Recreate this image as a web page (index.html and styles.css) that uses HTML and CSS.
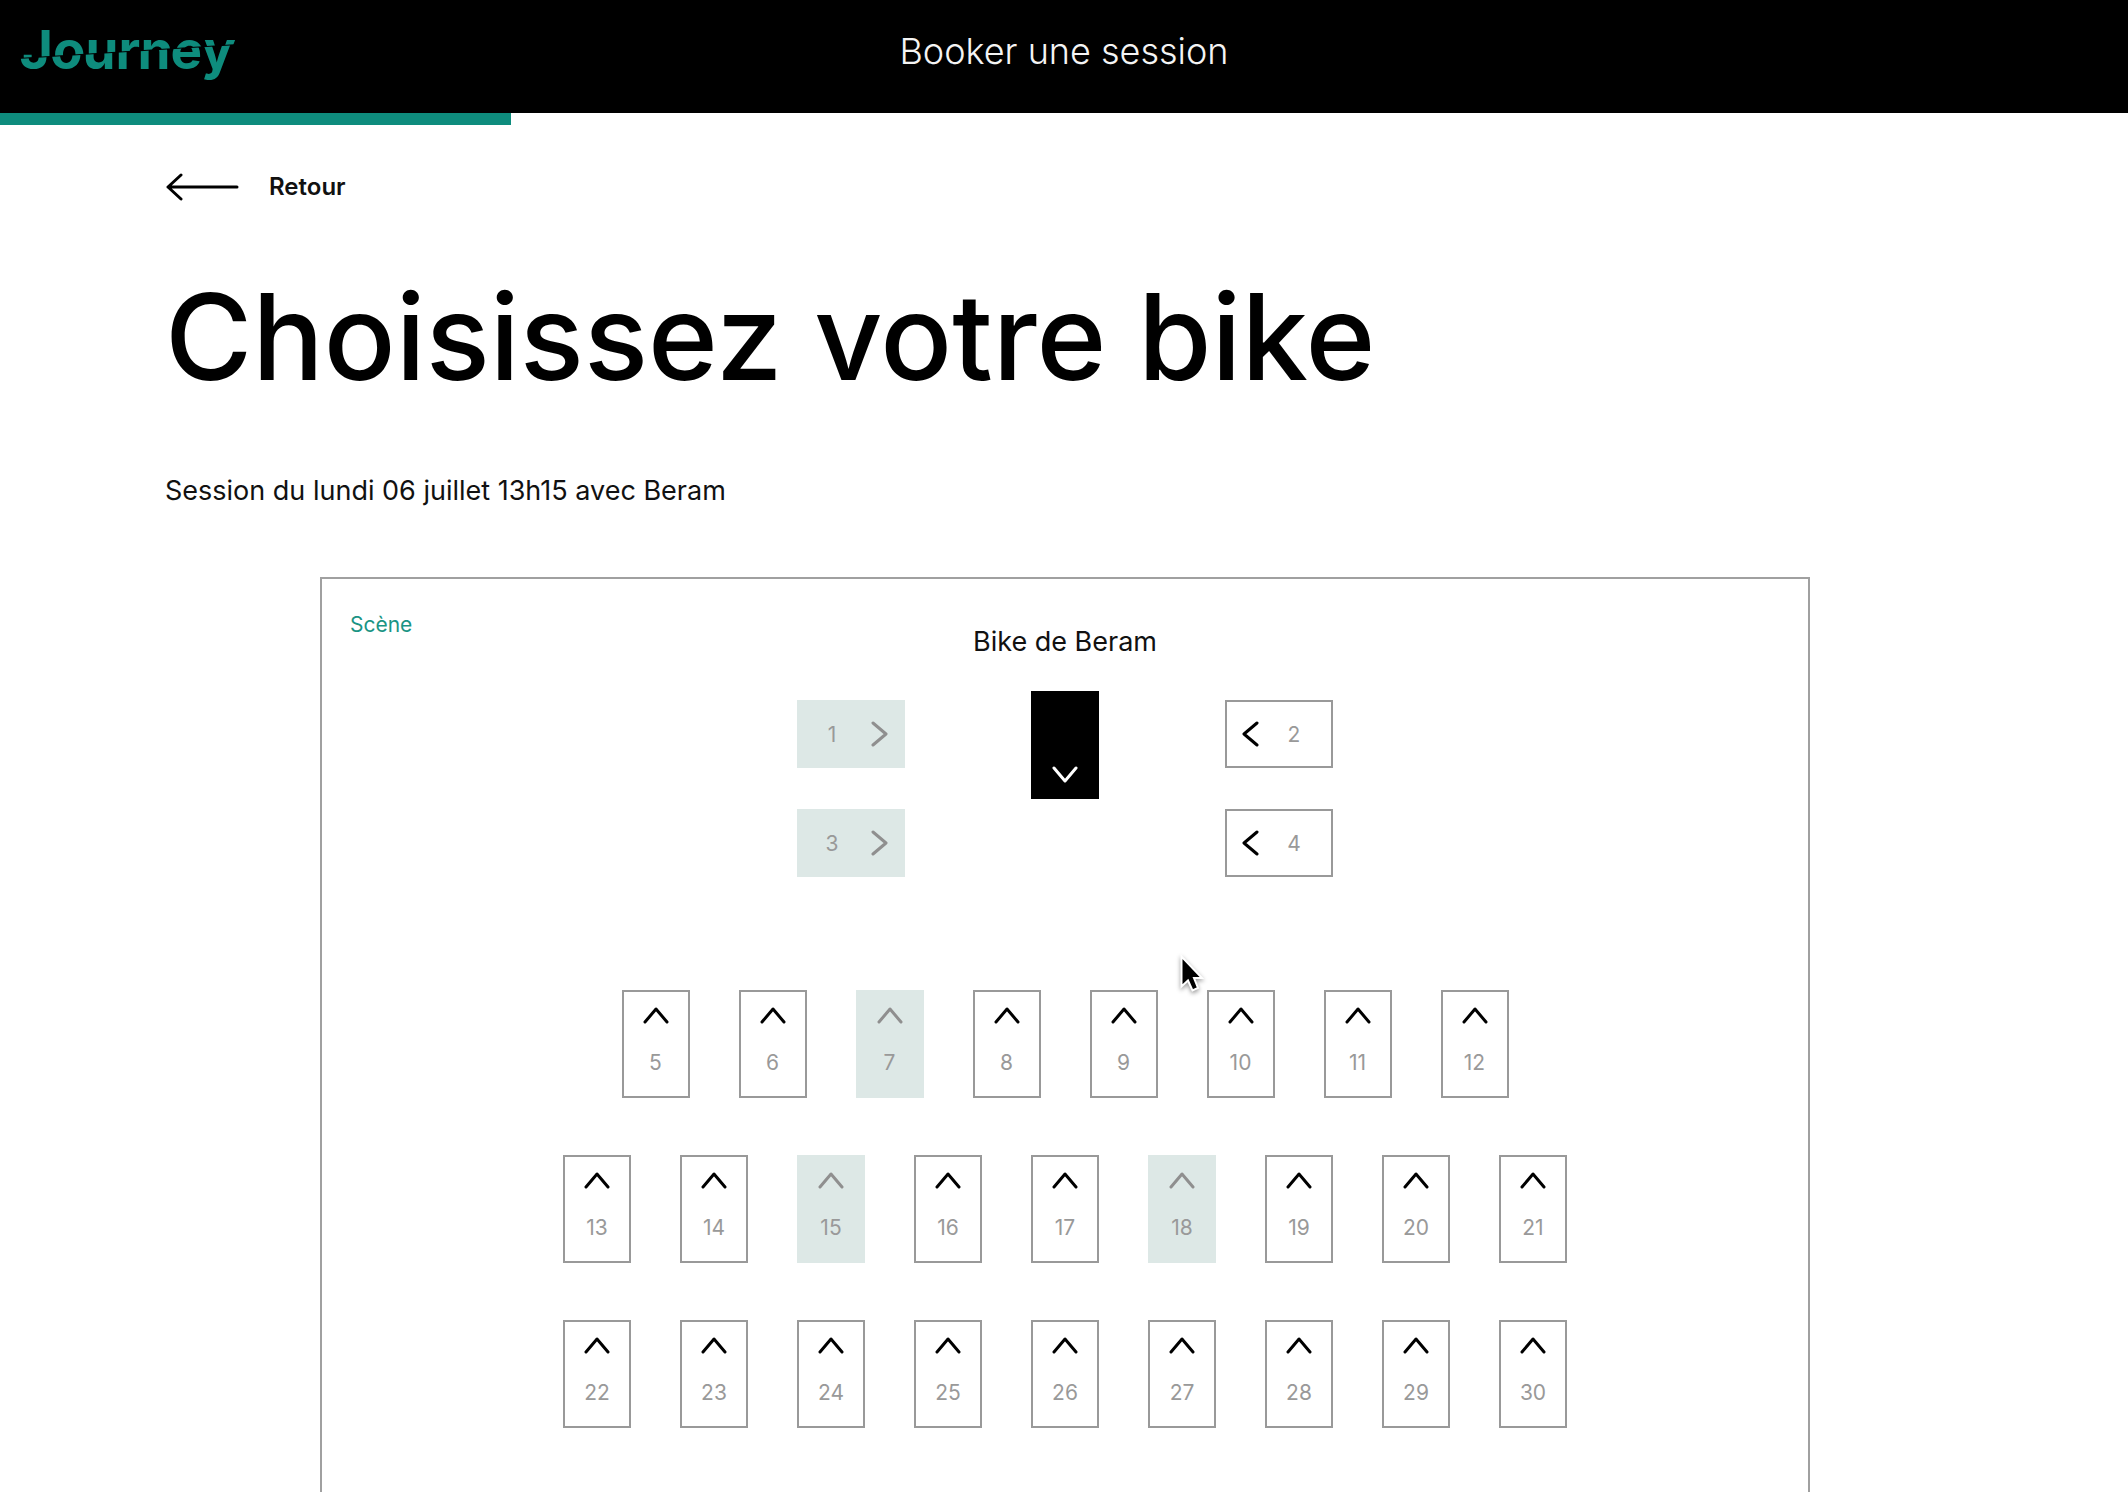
FILE: index.html
```html
<!DOCTYPE html>
<html lang="fr">
<head>
  <meta charset="utf-8">
  <meta name="viewport" content="width=device-width, initial-scale=1">
  <title>Journey – Booker une session</title>
  <link rel="stylesheet" href="styles.css">
</head>
<body>
  <svg class="sprite" aria-hidden="true">
    <symbol id="chevron-up" viewBox="0 0 26 18"><path d="M2 16 13 3l11 13"/></symbol>
    <symbol id="chevron-down" viewBox="0 0 26 18"><path d="M2 2l11 13L24 2"/></symbol>
    <symbol id="chevron-left" viewBox="0 0 18 26"><path d="M16 2 3 13l13 11"/></symbol>
    <symbol id="chevron-right" viewBox="0 0 18 26"><path d="M2 2l13 11L2 24"/></symbol>
  </svg>

  <header class="topbar">
    <a class="logo" href="#" aria-label="Journey">
      <svg width="220" height="64" viewBox="0 0 220 64">
        <clipPath id="upper"><path d="M0 0H220V25L0 39Z"/></clipPath>
        <clipPath id="lower"><path d="M0 40 220 26V64H0Z"/></clipPath>
        <g clip-path="url(#upper)"><text id="wordmark" class="logo-text" x="4" y="50">Journey</text></g>
        <g clip-path="url(#lower)"><use href="#wordmark" x="-3"/></g>
      </svg>
    </a>
    <p class="topbar-title">Booker une session</p>
  </header>
  <div class="progress"><div class="progress-bar" style="width: 24%"></div></div>

  <main class="content">
    <a class="back" href="#">
      <svg width="74" height="28" viewBox="0 0 74 28"><path d="M16 2 3 14l13 12M3 14h69"/></svg>
      <span>Retour</span>
    </a>
    <h1 class="heading">Choisissez votre bike</h1>
    <p class="session">Session du lundi 06 juillet 13h15 avec Beram</p>

    <section class="room" aria-label="Plan de la salle">
      <div class="stage">
        <p class="stage-label">Scène</p>
        <p class="coach-name">Bike de Beram</p>
      </div>
      <div class="front">
        <div class="side">
          <button class="seat wide" disabled><span class="number">1</span><svg class="icon-x"><use href="#chevron-right"/></svg></button>
          <button class="seat wide" disabled><span class="number">3</span><svg class="icon-x"><use href="#chevron-right"/></svg></button>
        </div>
        <div class="coach"><svg class="icon-y"><use href="#chevron-down"/></svg></div>
        <div class="side">
          <button class="seat wide"><svg class="icon-x"><use href="#chevron-left"/></svg><span class="number">2</span></button>
          <button class="seat wide"><svg class="icon-x"><use href="#chevron-left"/></svg><span class="number">4</span></button>
        </div>
      </div>
      <div class="rows">
        <div class="row">
          <button class="seat"><svg class="icon-y"><use href="#chevron-up"/></svg>5</button>
          <button class="seat"><svg class="icon-y"><use href="#chevron-up"/></svg>6</button>
          <button class="seat" disabled><svg class="icon-y"><use href="#chevron-up"/></svg>7</button>
          <button class="seat"><svg class="icon-y"><use href="#chevron-up"/></svg>8</button>
          <button class="seat"><svg class="icon-y"><use href="#chevron-up"/></svg>9</button>
          <button class="seat"><svg class="icon-y"><use href="#chevron-up"/></svg>10</button>
          <button class="seat"><svg class="icon-y"><use href="#chevron-up"/></svg>11</button>
          <button class="seat"><svg class="icon-y"><use href="#chevron-up"/></svg>12</button>
        </div>
        <div class="row">
          <button class="seat"><svg class="icon-y"><use href="#chevron-up"/></svg>13</button>
          <button class="seat"><svg class="icon-y"><use href="#chevron-up"/></svg>14</button>
          <button class="seat" disabled><svg class="icon-y"><use href="#chevron-up"/></svg>15</button>
          <button class="seat"><svg class="icon-y"><use href="#chevron-up"/></svg>16</button>
          <button class="seat"><svg class="icon-y"><use href="#chevron-up"/></svg>17</button>
          <button class="seat" disabled><svg class="icon-y"><use href="#chevron-up"/></svg>18</button>
          <button class="seat"><svg class="icon-y"><use href="#chevron-up"/></svg>19</button>
          <button class="seat"><svg class="icon-y"><use href="#chevron-up"/></svg>20</button>
          <button class="seat"><svg class="icon-y"><use href="#chevron-up"/></svg>21</button>
        </div>
        <div class="row">
          <button class="seat"><svg class="icon-y"><use href="#chevron-up"/></svg>22</button>
          <button class="seat"><svg class="icon-y"><use href="#chevron-up"/></svg>23</button>
          <button class="seat"><svg class="icon-y"><use href="#chevron-up"/></svg>24</button>
          <button class="seat"><svg class="icon-y"><use href="#chevron-up"/></svg>25</button>
          <button class="seat"><svg class="icon-y"><use href="#chevron-up"/></svg>26</button>
          <button class="seat"><svg class="icon-y"><use href="#chevron-up"/></svg>27</button>
          <button class="seat"><svg class="icon-y"><use href="#chevron-up"/></svg>28</button>
          <button class="seat"><svg class="icon-y"><use href="#chevron-up"/></svg>29</button>
          <button class="seat"><svg class="icon-y"><use href="#chevron-up"/></svg>30</button>
        </div>
      </div>
      <svg class="pointer" width="24" height="38" viewBox="0 0 24 38" aria-hidden="true">
        <path d="M1.500 .5V30.500L8 24.500 12.500 34.500 18 32 14 22H22Z"/>
      </svg>
    </section>
  </main>
</body>
</html>
```
FILE: styles.css
```css
* {
  box-sizing: border-box;
}

html {
  scrollbar-width: none;
}

body {
  margin: 0;
  height: 100vh;
  overflow-x: hidden;
  overflow-y: auto;
  scrollbar-width: none;
  background: #fff;
  color: #000;
  font-family: Inter, "Open Sans", sans-serif;
}

p,
h1 {
  margin: 0;
}

.sprite {
  display: none;
}

/* Top bar */
.topbar {
  display: grid;
  grid-template-columns: 1fr auto 1fr;
  align-items: center;
  padding: 0 18px 11px;
  background: #000;
}

.logo svg {
  display: block;
}

.logo-text {
  font-size: 53px;
  font-weight: 700;
  fill: #0e8c7d;
}

.topbar-title {
  color: #f4f4f4;
  font-size: 36px;
  font-weight: 300;
  line-height: 102px;
}

.progress-bar {
  height: 12px;
  background: #0e8c7d;
}

/* Page content */
.content {
  padding: 45px 163px 80px 165px;
}

.back {
  display: inline-flex;
  align-items: center;
  gap: 30px;
  color: #111;
  font-size: 24px;
  font-weight: 600;
  line-height: 34px;
  text-decoration: none;
  vertical-align: top;
}

.back path {
  fill: none;
  stroke: #000;
  stroke-width: 3;
  stroke-linecap: round;
  stroke-linejoin: round;
}

.heading {
  margin-top: 61px;
  font-size: 119px;
  font-weight: 500;
  line-height: 144px;
}

.session {
  margin-top: 64px;
  color: #111;
  font-size: 27px;
  line-height: 36px;
}

/* Room plan */
.room {
  position: relative;
  margin: 68px 155px 0;
  padding: 31px 28px 120px;
  border: 2px solid #a0a0a0;
}

.stage {
  display: grid;
  grid-template-columns: 1fr auto 1fr;
  align-items: start;
}

.stage-label {
  color: #1a9484;
  font-size: 21px;
  line-height: 30px;
}

.coach-name {
  margin-top: 14px;
  color: #111;
  font-size: 27px;
  line-height: 36px;
}

.front {
  display: flex;
  justify-content: center;
  align-items: flex-start;
  gap: 126px;
  margin-top: 31px;
}

.side {
  display: flex;
  flex-direction: column;
  gap: 41px;
  padding-top: 9px;
}

.coach {
  display: flex;
  align-items: flex-end;
  justify-content: center;
  width: 68px;
  height: 108px;
  padding-bottom: 15px;
  background: #000;
  color: #fff;
}

.rows {
  display: flex;
  flex-direction: column;
  gap: 57px;
  margin-top: 113px;
}

.row {
  display: flex;
  justify-content: center;
  gap: 49px;
}

.seat {
  display: flex;
  flex-direction: column;
  align-items: center;
  gap: 25px;
  width: 68px;
  height: 108px;
  padding: 14px 0 0;
  border: 2px solid #999;
  background: #fff;
  color: #999;
  font-family: inherit;
  font-size: 21px;
  line-height: 28px;
  cursor: pointer;
}

.seat.wide {
  flex-direction: row;
  gap: 24px;
  width: 108px;
  height: 68px;
  padding: 0 14px;
}

.seat.wide:disabled {
  justify-content: flex-end;
  gap: 28px;
}

.number {
  width: 22px;
  padding-top: 2px;
  text-align: center;
}

.seat:disabled {
  border-color: #dde8e6;
  background: #dde8e6;
  color: #999;
  cursor: default;
}

.icon-x,
.icon-y {
  flex: none;
  fill: none;
  stroke: #000;
  stroke-width: 3;
  stroke-linecap: round;
  stroke-linejoin: round;
}

.icon-x {
  width: 18px;
  height: 26px;
}

.icon-y {
  width: 26px;
  height: 18px;
}

.coach .icon-y {
  stroke: #fff;
}

.seat:disabled svg {
  stroke: #8f8f8f;
}

.pointer {
  position: absolute;
  top: 377px;
  left: calc(50% + 115px);
  overflow: visible;
  fill: #000;
  stroke: #fff;
  stroke-width: 2;
  filter: drop-shadow(0 2px 2px rgba(0, 0, 0, 0.4));
}
```
